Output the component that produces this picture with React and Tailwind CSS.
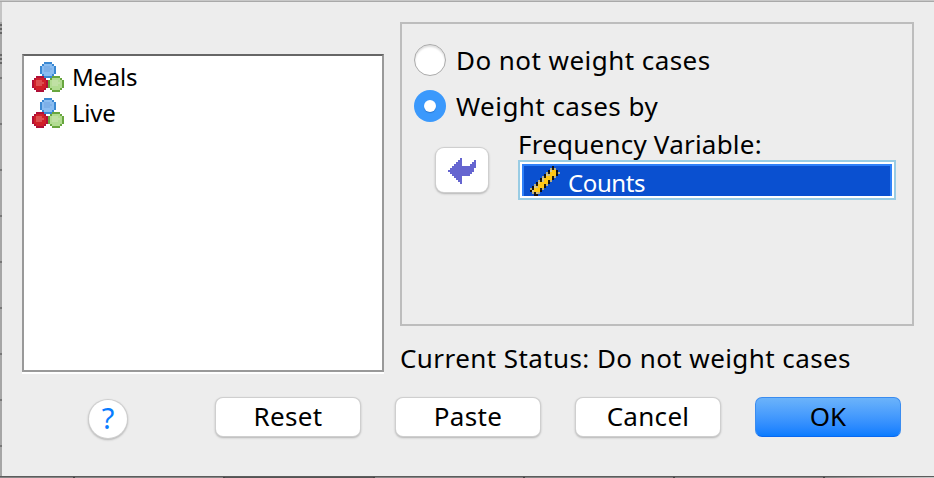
import React from "react";

const Ball = ({ x, y, rim, fill, light }) => (
  <g transform={`translate(${x} ${y})`}>
    <path fill={rim} d="M2 0h4v1h1v1h1v4h-1v1h-1v1h-4v-1h-1v-1h-1v-4h1v-1h1z" />
    <path fill={fill} d="M2 1h4v1h1v4h-1v1h-4v-1h-1v-4h1z" />
    <path fill={light} d="M2 2h3v1h1v1h-1v1h-3z" />
  </g>
);

const VariableIcon = () => (
  <svg width="32" height="30" viewBox="0 0 16 15" shapeRendering="crispEdges" className="shrink-0">
    <Ball x={4} y={0} rim="#3a88d2" fill="#8abcf0" light="#7db0e8" />
    <Ball x={0} y={7} rim="#b01038" fill="#d02028" light="#dc5050" />
    <Ball x={8} y={7} rim="#68a63e" fill="#b2dc92" light="#c0e0a4" />
  </svg>
);

const ArrowIcon = () => (
  <svg width="28" height="26" viewBox="0 0 14 13" shapeRendering="crispEdges">
    <path fill="#6565d0" d="M0 6h1V5h1V4h1V3h1V2h1V1h1V0h1v4h4V3h1V2h1V1h1v4h-1v2h-1v1h-1v1H7v4H6v-1H5v-1H4v-1H3V9H2V8H1V7H0z" />
  </svg>
);

const rulerPixels = [];
for (let y = 0; y < 15; y++) {
  const left = y < 12 ? 12 - y : y - 11;
  const right = y < 4 ? 12 + y : 18 - y;
  for (let x = left; x <= right; x++) {
    let color = "#ffc814";
    if (x === left || x === right) color = y % 2 ? "#b8b080" : "#101010";
    else if (x === left + 1) color = y % 2 ? "#201c10" : "#d8cc90";
    else if (x === left + 2 && y % 3 === 1) color = "#c9c08a";
    else if (x === right - 1 && y % 2) color = "#201c10";
    rulerPixels.push({ x, y, color });
  }
}

const RulerIcon = () => (
  <svg width="32" height="30" viewBox="0 0 16 15" shapeRendering="crispEdges" className="shrink-0">
    {rulerPixels.map((p) => (
      <rect key={`${p.x}-${p.y}`} x={p.x} y={p.y} width="1" height="1" fill={p.color} />
    ))}
  </svg>
);

function Button({ children }) {
  return (
    <button className="flex h-[38px] w-[144px] items-center justify-center rounded-[7px] bg-white pb-px text-[26px] tracking-[0.3px] shadow-[0_0_0_1px_#cfcfcf,0_1px_2px_1px_#b5b5b5]">
      {children}
    </button>
  );
}

export default function App() {
  return (
    <div className="flex h-[478px] w-[934px] flex-col overflow-hidden bg-[#ededed] font-['Noto_Sans',sans-serif] text-black">
      <div className="h-[2px] shrink-0 border-b border-[#a9a9a9] bg-[#c8c8c8]" />
      <div className="flex h-[474px] shrink-0">
        <div className="w-[2px] shrink-0 bg-[#a6a6a6]">
          <div className="h-[20px] bg-[#c4c4c4]" />
          <div className="h-[14px] bg-[repeating-linear-gradient(to_bottom,#a6a6a6_0_2px,#666_2px_4px)]" />
          <div className="h-[16px]" />
          <div className="h-[14px] bg-[repeating-linear-gradient(to_bottom,#a6a6a6_0_2px,#666_2px_4px)]" />
          <div className="h-[410px] bg-[repeating-linear-gradient(to_bottom,transparent_0_11px,#777_11px_13px,transparent_13px_46px)]" />
        </div>
        <div className="w-[932px]">
          <main className="flex h-[384px] pl-5">
            <section className="mt-[52px] flex h-[318px] w-[362px] shrink-0 flex-col border-2 border-[#999] border-t-[#666] bg-white pt-[3px] pl-2 text-[24px] tracking-[-0.25px] shadow-[0_2px_0_#fff]">
              <div className="flex h-9 items-center gap-2"><VariableIcon /><span>Meals</span></div>
              <div className="flex h-9 items-center gap-2"><VariableIcon /><span>Live</span></div>
            </section>
            <div className="ml-4 pt-5">
              <section className="h-[304px] w-[514px] border-2 border-[#bdbdbd] pt-5 pl-3 text-[26px] leading-8">
                <div className="flex h-8 items-center gap-[10px] tracking-[0.45px]">
                  <span className="size-8 rounded-full border border-[#aaa] bg-white shadow-[inset_0_2px_2px_#ddd]" /><span>Do not weight cases</span>
                </div>
                <div className="mt-[14px] flex h-8 items-center gap-[10px] tracking-[0.45px]">
                  <span className="flex size-8 items-center justify-center rounded-full bg-[#3b99fc]"><span className="size-[12px] rounded-full bg-white shadow-[0_1px_1px_#2a78d0]" /></span><span>Weight cases by</span>
                </div>
                <div className="flex">
                  <button className="mt-[26px] ml-[22px] flex h-[44px] w-[52px] items-center justify-center rounded-[8px] bg-white pt-[2px] shadow-[0_0_0_1px_#cfcfcf,0_1px_2px_1px_#b5b5b5]"><ArrowIcon /></button>
                  <div className="ml-[30px] pt-[6px]">
                    <div className="tracking-[0.22px]">Frequency Variable:</div>
                    <div className="h-10 w-[378px] border-2 border-[#99cce4] bg-white p-[2px]">
                      <div className="flex h-8 gap-2 border-2 border-b-0 border-[#2f80f8] bg-[#0a50d0] pl-[4px] text-[24px] tracking-[-0.4px] text-white"><RulerIcon /><span className="pt-px leading-8">Counts</span></div>
                    </div>
                  </div>
                </div>
              </section>
              <div className="mt-[14px] text-[26px] leading-9 tracking-[0.42px]">Current Status: Do not weight cases</div>
            </div>
          </main>
          <footer className="flex h-[90px] items-start pt-3 pl-[87px]">
            <button className="mt-[2px] flex size-[38px] items-center justify-center rounded-full bg-white pb-[2px] text-[29px] text-[#087cff] shadow-[0_0_0_1px_#cfcfcf,0_1px_2px_1px_#b5b5b5]">?</button>
            <div className="ml-[89px] flex gap-[36px]">
              <Button>Reset</Button><Button>Paste</Button><Button>Cancel</Button>
              <button className="-mt-px -ml-px flex h-[40px] w-[146px] items-center justify-center rounded-[7px] border border-[#3a8cf0] border-b-[#0a68f0] bg-linear-to-b from-[#6bb3fa] to-[#087cff] pb-px text-[26px]">OK</button>
            </div>
          </footer>
        </div>
      </div>
      <div className="flex h-[2px] shrink-0 border-t border-[#5c5c5c] bg-[#858585]">
        <div className="h-px w-[75px] border-r-2 border-[#444]" />
        <div className="h-px w-[150px] border-r-2 border-[#444]" />
        <div className="h-px w-[150px] border-r-2 border-[#444] bg-[#555]" />
        <div className="h-px w-[150px] border-r-2 border-[#444]" />
        <div className="h-px w-[150px] border-r-2 border-[#444]" />
        <div className="h-px w-[150px] border-r-2 border-[#444]" />
        <div className="h-px flex-1 bg-linear-to-r from-transparent to-[#c8c8c8]" />
      </div>
    </div>
  );
}
